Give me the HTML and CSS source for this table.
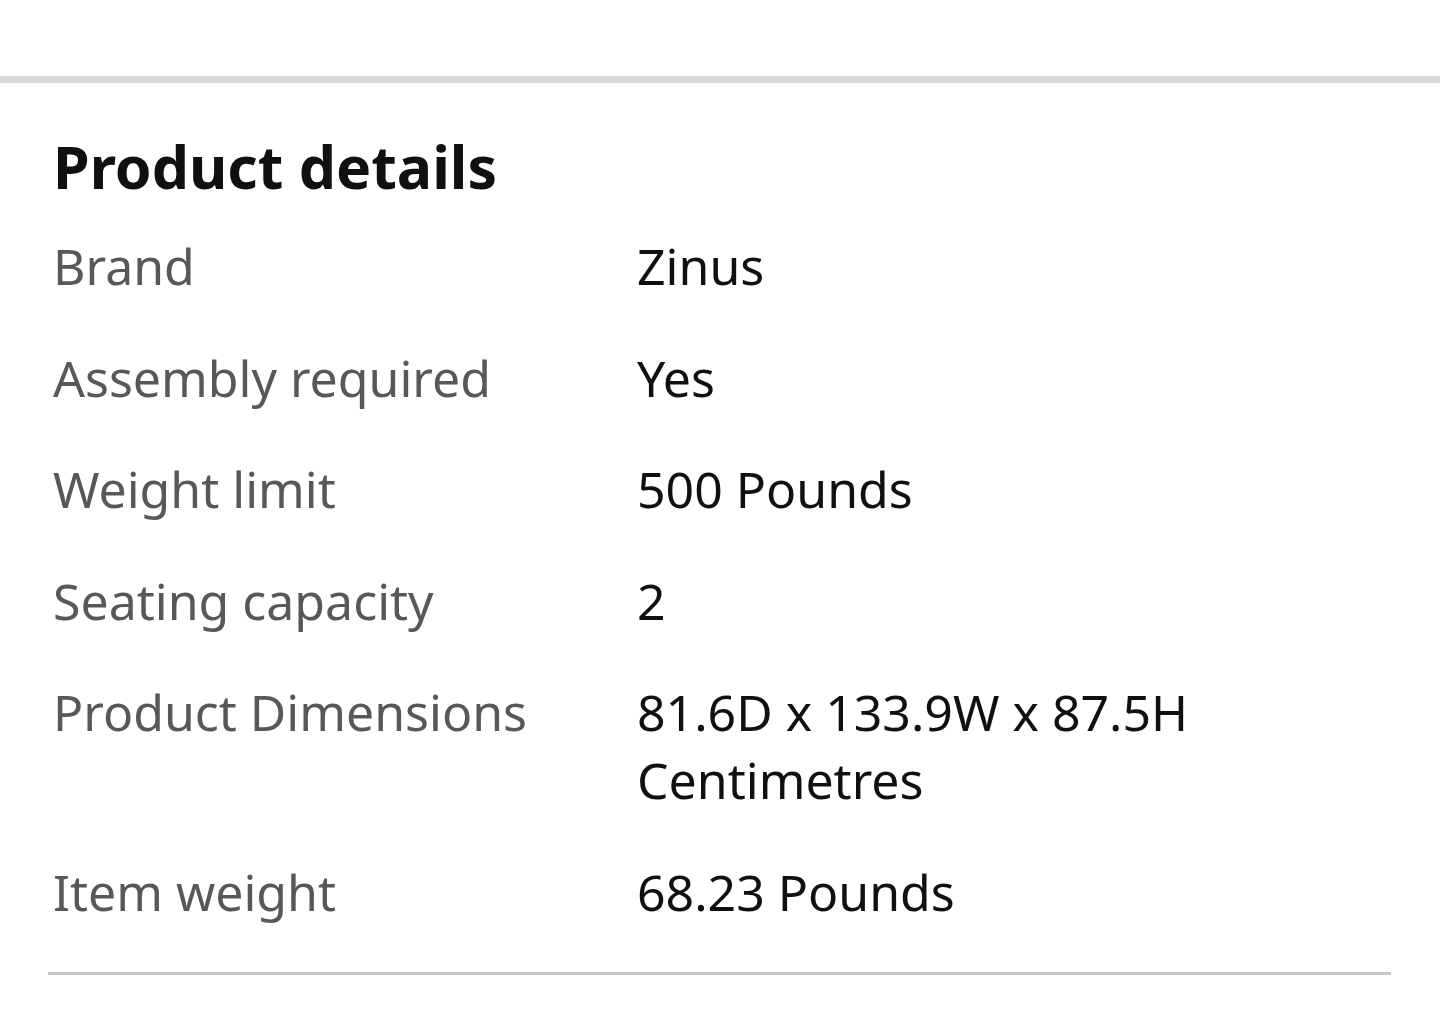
FILE: index.html
```html
<!DOCTYPE html>
<html lang="en">
<head>
    <meta charset="UTF-8">
    <meta name="viewport" content="width=device-width, initial-scale=1.0">
    <title>Product details</title>
    <link rel="stylesheet" href="styles.css">
</head>
<body>
    <div class="top-rule"></div>

    <div class="details">
        <h2>Product details</h2>
        <div class="specs">
            <div class="spec-row">
                <div class="spec-label">Brand</div>
                <div class="spec-value">Zinus</div>
            </div>
            <div class="spec-row">
                <div class="spec-label">Assembly required</div>
                <div class="spec-value">Yes</div>
            </div>
            <div class="spec-row">
                <div class="spec-label">Weight limit</div>
                <div class="spec-value">500 Pounds</div>
            </div>
            <div class="spec-row">
                <div class="spec-label">Seating capacity</div>
                <div class="spec-value">2</div>
            </div>
            <div class="spec-row">
                <div class="spec-label">Product Dimensions</div>
                <div class="spec-value">81.6D x 133.9W x 87.5H Centimetres</div>
            </div>
            <div class="spec-row">
                <div class="spec-label">Item weight</div>
                <div class="spec-value">68.23 Pounds</div>
            </div>
        </div>
    </div>
</body>
</html>
```

FILE: styles.css
```css
body {
    font-family: "Noto Sans", Arial, sans-serif;
    color: #0f1111;
    background: #fff;
    margin: 0;
    padding: 0;
}

/* Thick divider above the section */
.top-rule {
    margin-top: 76px;
    height: 7px;
    background-color: #d5d9d9;
}

.details {
    margin: 0 49px 0 48px;
    padding: 49px 0 46px 5px;
    border-bottom: 3px solid #c7c7c7;
}

.details h2 {
    margin: 0;
    font-size: 59px;
    line-height: 68px;
    font-weight: 700;
}

.specs {
    margin-top: 32px;
    display: flex;
    flex-direction: column;
    gap: 43.5px;
}

.spec-row {
    display: grid;
    grid-template-columns: 584px 1fr;
    font-size: 50px;
    line-height: 68px;
}

.spec-label {
    color: #565959;
}

.spec-value {
    color: #0f1111;
}
```
